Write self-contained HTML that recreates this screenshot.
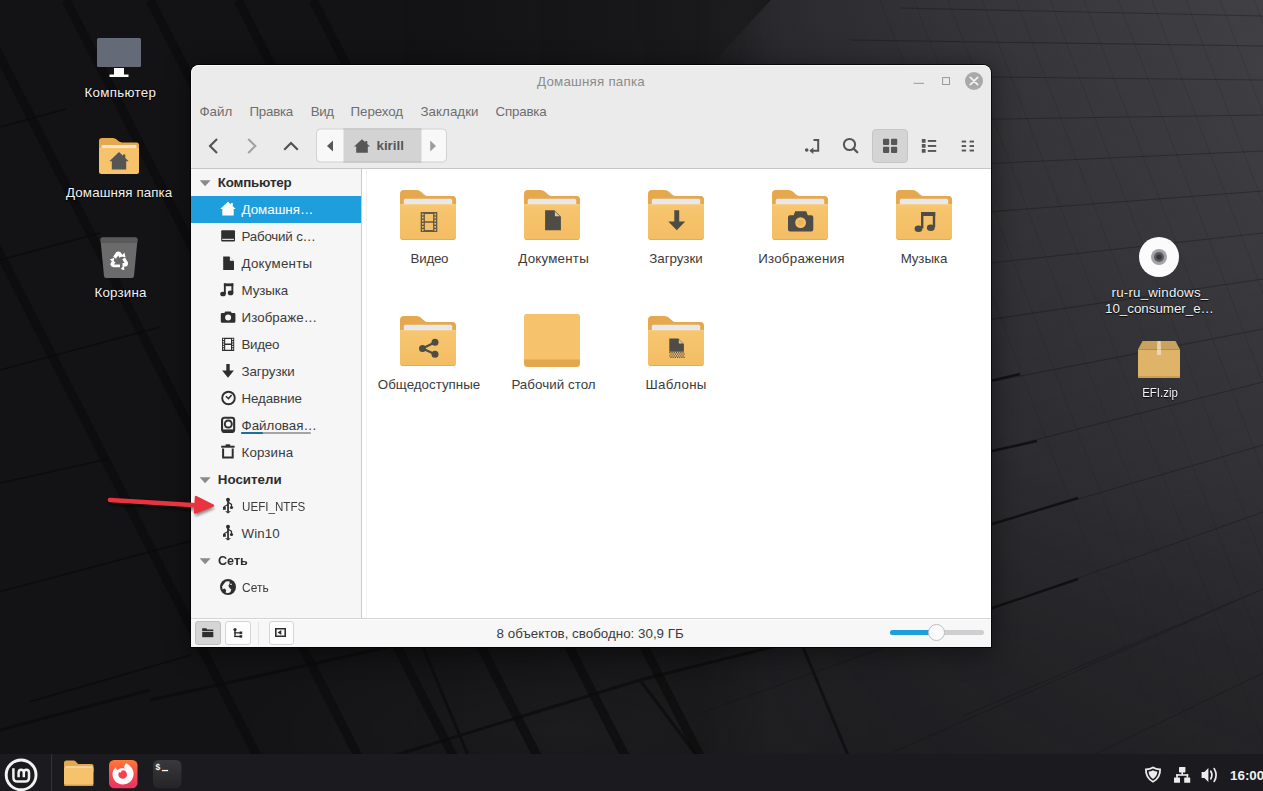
<!DOCTYPE html>
<html lang="ru">
<head>
<meta charset="utf-8">
<title>Домашняя папка</title>
<style>
*{box-sizing:border-box;margin:0;padding:0}
html,body{width:1263px;height:791px;overflow:hidden;background:#141416}
body{position:relative;font-family:"Liberation Sans",sans-serif;font-size:13.33px;color:#3a3a3a}
svg{display:block;overflow:visible}
#wall{position:absolute;left:0;top:0;width:1263px;height:791px}
.dl{position:absolute;display:block;color:#f2f2f2;font-size:13.33px;white-space:nowrap;text-align:center;text-shadow:0 1px 1px rgba(0,0,0,.85),0 0 2px rgba(0,0,0,.5);line-height:16px;height:16px}
.di{position:absolute}
#win{position:absolute;left:191px;top:65px;width:800px;height:582px;background:#ebebec;border-radius:8px 8px 0 0;overflow:hidden}
#winsh{position:absolute;left:191px;top:65px;width:800px;height:582px;border-radius:8px 8px 0 0;box-shadow:0 0 0 1px rgba(0,0,0,.75),0 4px 26px 2px rgba(0,0,0,.42)}
#win .hl{position:absolute;left:0;top:0;right:0;bottom:0;border-radius:8px 8px 0 0;box-shadow:inset 0 1px 0 #f9f9f9,inset 1px 0 0 #f4f4f4}
.t{position:absolute;display:block;white-space:nowrap;line-height:16px;height:16px}
.menu{color:#6e6e6e;top:39px}
#side{position:absolute;left:0;top:104px;width:170px;height:449px;background:#f6f6f6}
#sidediv{position:absolute;left:170px;top:104px;width:1px;height:449px;background:#c9c9c9}
#main{position:absolute;left:171px;top:104px;width:629px;height:449px;background:#fff}
#tbline{position:absolute;left:0;top:103px;width:800px;height:1px;background:#c6c6c8}
#status{position:absolute;left:0;top:553px;width:800px;height:29px;background:#f7f7f7;border-top:1px solid #d4d4d4;box-shadow:inset 0 1px 0 #fdfdfd}
.row{position:absolute;left:0;width:170px;height:27px}
.row.sel{background:#1f9ede}
.row .lb{position:absolute;display:block;left:50.5px;top:6px;height:16px;line-height:16px;white-space:nowrap;color:#3b3b3b}
.row.sel .lb{color:#fff}
.row.h .lb{left:26.8px;font-weight:bold;color:#2c2c2c}
.row svg{position:absolute}
.fl{position:absolute;display:block;color:#3b3b3b;white-space:nowrap;text-align:center;line-height:16px;height:16px}
.fi{position:absolute}
#panel{position:absolute;left:0;top:754px;width:1263px;height:37px;background:#1b1b1f}
#panel svg{position:absolute}
.sbtn{position:absolute;top:2px;width:25.5px;height:24px;border:1px solid #d6d6d6;border-radius:3px;background:#fdfdfd}
.sbtn.on{background:#d5d5d5;border-color:#c1c1c1}
</style>
</head>
<body>

<svg id="wall" viewBox="0 0 1263 791">
<defs>
<linearGradient id="gh" gradientUnits="userSpaceOnUse" x1="0" y1="0" x2="1263" y2="0">
<stop offset="0.0000" stop-color="#414146" stop-opacity="0"/>
<stop offset="0.3167" stop-color="#414146" stop-opacity="0"/>
<stop offset="0.4434" stop-color="#414146" stop-opacity="0.06"/>
<stop offset="0.5542" stop-color="#414146" stop-opacity="0.14"/>
<stop offset="0.5859" stop-color="#414146" stop-opacity="0.33"/>
<stop offset="0.6097" stop-color="#414146" stop-opacity="0.5"/>
<stop offset="0.6334" stop-color="#414146" stop-opacity="0.55"/>
<stop offset="0.6888" stop-color="#414146" stop-opacity="0.63"/>
<stop offset="0.7443" stop-color="#414146" stop-opacity="0.71"/>
<stop offset="0.7918" stop-color="#414146" stop-opacity="0.77"/>
<stop offset="0.8741" stop-color="#414146" stop-opacity="0.86"/>
<stop offset="1.0000" stop-color="#414146" stop-opacity="0.98"/>
</linearGradient>
<linearGradient id="gedge" gradientUnits="userSpaceOnUse" x1="690" y1="0" x2="771" y2="0"><stop offset="0" stop-color="#151517" stop-opacity="0"/><stop offset="1" stop-color="#151517" stop-opacity=".8"/></linearGradient>
<linearGradient id="gv" gradientUnits="userSpaceOnUse" x1="0" y1="0" x2="0" y2="791">
<stop offset="0" stop-color="#fff"/>
<stop offset=".316" stop-color="#e0e0e0"/>
<stop offset=".594" stop-color="#b4b4b4"/>
<stop offset=".82" stop-color="#747474"/>
<stop offset=".95" stop-color="#606060"/>
<stop offset="1" stop-color="#585858"/>
</linearGradient>
<mask id="mv"><rect width="1263" height="791" fill="url(#gv)"/></mask>
<radialGradient id="glow" cx="560" cy="730" r="330" gradientUnits="userSpaceOnUse" gradientTransform="translate(0 511) scale(1 .3)">
<stop offset="0" stop-color="#fff" stop-opacity=".035"/><stop offset="1" stop-color="#fff" stop-opacity="0"/>
</radialGradient>
<linearGradient id="ffront" x1="0" y1="0" x2="0" y2="1"><stop offset="0" stop-color="#f7c670"/><stop offset="1" stop-color="#f3bd63"/></linearGradient>
</defs>
<rect width="1263" height="791" fill="#131315"/>
<rect width="1263" height="791" fill="url(#gh)" mask="url(#mv)"/>
<path d="M690 0 H771 L709.6 66 H690Z" fill="url(#gedge)"/>
<rect width="1263" height="791" fill="url(#glow)"/>
<path d="M-130 0 L275 791 M-29 0 L376 791 M66 0 L471 791 M150 0 L555 791 M238 0 L643 791 M313 0 L718 791" stroke="#0b0b0d" stroke-width="9" fill="none" opacity=".7"/>
<path d="M150 700 L420 640 M380 760 L640 680 L800 640 M0 730 L150 690 M640 680 L700 760 M420 640 L470 760 M800 640 L850 760" stroke="#0b0b0d" stroke-width="3" fill="none" opacity=".7"/>
<path d="M700 73.6 L1263 80 M700 123.6 L1263 115 M700 176.7 L1263 151 M700 233.8 L1263 191 M700 295.1 L1263 233 M700 362.5 L1263 279 M700 438.2 L1263 329 M700 525.4 L1263 382 M700 609.8 L1263 445 M700 713.2 L1263 512 M700 837.3 L1263 589 M963 716 L1263 589 M1000 800 L1263 673 M850 40 L1263 46 M900 8 L1263 16" stroke="#151517" stroke-width="1.1" fill="none" opacity=".38"/>
<path d="M880 0 L1180 791 M914 0 L1214 791 M948 0 L1248 791 M982 0 L1282 791 M1016 0 L1316 791 M1050 0 L1350 791 M1084 0 L1384 791 M1118 0 L1418 791 M1152 0 L1452 791 M1186 0 L1486 791 M1220 0 L1520 791 M1254 0 L1554 791 M1288 0 L1588 791 M1322 0 L1622 791" stroke="#18181a" stroke-width="1" fill="none" opacity=".15"/>
<path d="M992 451 L1037 441 M992 524 L1078 498 M992 608 L1078 579 M992 380.5 L1020 374" stroke="#0d0d0f" stroke-width="2.4" fill="none" opacity=".8"/>
<path d="M0 483 L108 459 M0 591.5 L191 541 M29 702 L191 655 M0 127 L66 109 M0 260 L100 233 M0 370 L160 327" stroke="#0a0a0c" stroke-width="1.6" fill="none" opacity=".7"/>
</svg>

<svg class="di" style="left:96px;top:37px" width="46" height="41" viewBox="0 0 46 41"><rect x="1" y="1" width="44" height="29" rx="1.5" fill="#646a78"/><path d="M18 31 H28 V37.5 H32.5 V40 H13.5 V37.5 H18Z" fill="#fafafa"/></svg>
<span class="dl" style="left:70.4px;top:85px;width:100px;letter-spacing:.33px">Компьютер</span>
<svg class="di" style="left:99px;top:138px" width="40" height="36" viewBox="0 0 40 36"><path d="M0 3 Q0 0 3 0 H14 Q16 0 18 1.8 L20 3.6 Q21 4.4 23 4.4 H37.5 Q40 4.4 40 7 V15 H0Z" fill="#e5a84c"/><rect x="2.5" y="7" width="35" height="5" rx="1" fill="#fbe6c9"/><path d="M0 10 H40 V33.5 Q40 36 37.5 36 H2.5 Q0 36 0 33.5Z" fill="#f6c36c"/><path d="M20 14 L10.3 23.3 H12.8 V31.5 H27.2 V23.3 H29.7 L26.3 20 V16.5 H24 V17.8Z" fill="#555555"/></svg>
<span class="dl" style="left:49.2px;top:185px;width:140px;letter-spacing:.11px">Домашняя папка</span>
<svg class="di" style="left:100px;top:237px" width="38" height="42" viewBox="0 0 38 42"><path d="M0.5 2.5 Q0.3 0.5 2.5 0.5 H35.5 Q37.7 0.5 37.5 2.5 L34 39 Q33.8 41 31.8 41 H6.2 Q4.2 41 4 39Z" fill="#6b6b6b"/><path d="M0.5 2.5 Q0.3 0.5 2.5 0.5 H35.5 Q37.7 0.5 37.5 2.5 L37.2 6 H0.8Z" fill="#5a5a5a"/><g fill="#fff" transform="translate(19.1 23.6) scale(1.1) translate(-19.7 -19.9)"><path d="M14.3 16.5 L17 12.2 Q19 11.2 21 12.2 L23.2 15.6 L20 17.3 L18.9 15.3 L16.9 18.2Z"/><path d="M25 17 L27.8 21.6 Q28.2 23.8 26.4 25.2 H22.8 V22 H24.6 L22.6 18.6Z"/><path d="M20.5 26 H14.5 Q12.2 25.4 11.6 23.2 L13.6 19.6 L16.4 21.4 L15 23.4 H20.5Z"/><path d="M24.5 12.6 L25.6 16.9 L21.3 16.2Z"/><path d="M21.2 27.6 L24.2 24 L24.4 28.6Z"/><path d="M11.2 19 L15.3 17.4 L14.8 21.8Z"/></g></svg>
<span class="dl" style="left:70.5px;top:285px;width:100px;letter-spacing:.19px">Корзина</span>
<svg class="di" style="left:1139px;top:237px" width="40" height="40" viewBox="0 0 40 40"><circle cx="20" cy="20" r="20" fill="#fbfbfb"/><circle cx="20" cy="20" r="8" fill="#a3a3a6"/><circle cx="20" cy="20" r="5" fill="#5b5b60"/><circle cx="20" cy="20" r="2.6" fill="#36363a"/></svg>
<span class="dl" style="left:1080px;top:285px;width:160px;letter-spacing:.2px">ru-ru_windows_</span>
<span class="dl" style="left:1079.5px;top:301px;width:160px">10_consumer_e…</span>
<svg class="di" style="left:1138px;top:341px" width="42" height="37" viewBox="0 0 42 37"><path d="M4.5 0 H37.5 L42 8.5 H0Z" fill="#c9a25d"/><path d="M0 8.5 H42 V35.5 Q42 37 40.5 37 H1.5 Q0 37 0 35.5Z" fill="#dfb469"/><path d="M19.3 0 H22.7 L23 8.5 H19Z" fill="#e9d2a8"/><rect x="19" y="8.5" width="4" height="5.5" fill="#ecd6ad"/><rect x="0" y="35" width="42" height="2" rx="1" fill="#c99f58"/></svg>
<span class="dl" style="left:1110px;top:385px;width:100px;transform:scaleX(.86)">EFI.zip</span>
<div id="winsh"></div><div id="win"><div class="hl"></div>
<span class="t" id="title" style="left:300px;width:200px;top:9px;text-align:center;color:#8b8b8b;letter-spacing:.22px">Домашняя папка</span>
<svg style="position:absolute;left:715px;top:6px" width="80" height="20" viewBox="906 71 80 20"><rect x="913.5" y="82.8" width="10.5" height="1" fill="#9a9a9a"/><rect x="942.6" y="77.6" width="6.9" height="6.9" fill="none" stroke="#9a9a9a" stroke-width="1"/><circle cx="974" cy="81" r="9" fill="#a9a9a9"/><path d="M970.3 77.3 L977.7 84.7 M977.7 77.3 L970.3 84.7" stroke="#f3f3f3" stroke-width="1.7" stroke-linecap="round"/></svg>
<span class="t menu" id="m0" style="left:8.4px;letter-spacing:0px">Файл</span>
<span class="t menu" id="m1" style="left:58.5px;letter-spacing:-0.25px">Правка</span>
<span class="t menu" id="m2" style="left:119.7px;letter-spacing:-0.4px">Вид</span>
<span class="t menu" id="m3" style="left:159.5px;letter-spacing:-0.05px">Переход</span>
<span class="t menu" id="m4" style="left:229.5px;letter-spacing:0.04px">Закладки</span>
<span class="t menu" id="m5" style="left:304.5px;letter-spacing:-0.18px">Справка</span>
<div id="tbline"></div>
<svg style="position:absolute;left:0;top:59px" width="800" height="44" viewBox="191 124 800 44"><g fill="none" stroke-linecap="square" stroke-linejoin="miter"><path d="M216.3 139.8 L210 146 L216.3 152.2" stroke="#525252" stroke-width="2.1"/><path d="M249 139.8 L255.3 146 L249 152.2" stroke="#a2a2a2" stroke-width="2.1"/><path d="M285 149 L291 143 L297 149" stroke="#525252" stroke-width="2.2"/></g><rect x="316.5" y="129" width="130" height="33" rx="4" fill="#f8f8f8" stroke="#d2d2d2"/><rect x="343.5" y="128.5" width="78" height="34" fill="#d3d3d3"/><path d="M343.5 129 H421.5 M343.5 162 H421.5" stroke="#bfbfbf"/><path d="M327 146 L333 140.6 V151.6Z" fill="#575757"/><path d="M436 146 L430.2 140.6 V151.6Z" fill="#9d9d9d"/><path d="M362 139.2 L354 146.6 H356.2 V152.8 H367.8 V146.6 H370 L367.3 144.1 V141 H365.4 V142.3Z" fill="#565656"/><circle cx="806.7" cy="150" r="1.8" fill="#555"/><path d="M813.5 140 H818.2 V150.8 H812" fill="none" stroke="#555" stroke-width="2"/><path d="M809.3 150.8 L813.3 147.6 V154Z" fill="#555"/><circle cx="849.5" cy="144.5" r="5.6" fill="none" stroke="#555" stroke-width="2"/><path d="M853.6 148.6 L857.3 152.3" stroke="#555" stroke-width="2.2" stroke-linecap="round"/><rect x="872.5" y="129.5" width="35" height="33" rx="3.5" fill="#d4d4d4" stroke="#c6c6c6"/><g fill="#565656"><rect x="883" y="138.8" width="6.2" height="6.2" rx="1"/><rect x="891" y="138.8" width="6.2" height="6.2" rx="1"/><rect x="883" y="146.8" width="6.2" height="6.2" rx="1"/><rect x="891" y="146.8" width="6.2" height="6.2" rx="1"/><rect x="921.8" y="139" width="3.8" height="3.8" rx=".6"/><rect x="921.8" y="144" width="3.8" height="3.8" rx=".6"/><rect x="921.8" y="149" width="3.8" height="3.8" rx=".6"/><rect x="927.8" y="140" width="8.4" height="1.9"/><rect x="927.8" y="145" width="8.4" height="1.9"/><rect x="927.8" y="150" width="8.4" height="1.9"/><rect x="961.7" y="140.6" width="4.4" height="1.9"/><rect x="961.7" y="145.1" width="4.4" height="1.9"/><rect x="961.7" y="149.6" width="4.4" height="1.9"/><rect x="969.6" y="140.6" width="4.4" height="1.9"/><rect x="969.6" y="145.1" width="4.4" height="1.9"/><rect x="969.6" y="149.6" width="4.4" height="1.9"/></g></svg>
<span class="t" id="kirill" style="left:185.5px;top:73px;font-weight:bold;color:#565656">kirill</span>
<div id="side">
<div class="row h" style="top:0px"><svg style="left:8px;top:10.5px" width="12" height="7" viewBox="0 0 12 7"><path d="M0.6 0.2 H11.6 L6.1 6.3Z" fill="#8a8a8a"/></svg><span class="lb" id="sb0" style="letter-spacing:-.19px">Компьютер</span></div>
<div class="row sel" style="top:27px"><svg style="left:28px;top:4px" width="18" height="18" viewBox="-1 -1 18 18" fill="#ffffff"><path d="M8 0.8 L0.2 8 H2.3 V14.6 H13.7 V8 H15.8 L12.8 5.2 V2 H10.8 V3.4Z"/></svg><span class="lb" id="sb1" style="">Домашня…</span></div>
<div class="row " style="top:54px"><svg style="left:28px;top:4px" width="18" height="18" viewBox="-1 -1 18 18" fill="#2e2e2e"><rect x="1.2" y="2.2" width="13.8" height="11.2" rx="1"/><rect x="2.2" y="10.8" width="11.8" height="1.1" fill="#f0f0f0"/></svg><span class="lb" id="sb2" style="letter-spacing:-.19px">Рабочий с…</span></div>
<div class="row " style="top:81px"><svg style="left:28px;top:4px" width="18" height="18" viewBox="-1 -1 18 18" fill="#2e2e2e"><path d="M3.2 1.6 H9.4 L14 6.2 V15 H3.2Z"/><path d="M9.9 1.8 L13.8 5.7 H9.9Z" fill="#f5f5f5"/></svg><span class="lb" id="sb3" style="letter-spacing:.24px">Документы</span></div>
<div class="row " style="top:108px"><svg style="left:28px;top:4px" width="18" height="18" viewBox="-1 -1 18 18" fill="#2e2e2e"><path d="M3.9 1.4 H13.3 V4.2 H3.9Z"/><rect x="3.9" y="1.4" width="1.9" height="10.6"/><rect x="11.4" y="1.4" width="1.9" height="9.6"/><ellipse cx="3" cy="12" rx="2.8" ry="2.3"/><ellipse cx="10.6" cy="10.9" rx="2.8" ry="2.3"/></svg><span class="lb" id="sb4" style="letter-spacing:-.1px">Музыка</span></div>
<div class="row " style="top:135px"><svg style="left:28px;top:4px" width="18" height="18" viewBox="-1 -1 18 18" fill="#2e2e2e"><path d="M0.8 5.2 Q0.8 4 2 4 H4.3 L5.3 2.4 H10.7 L11.7 4 H14.2 Q15.4 4 15.4 5.2 V12.5 Q15.4 13.7 14.2 13.7 H2 Q0.8 13.7 0.8 12.5Z"/><circle cx="8.1" cy="8.6" r="3" fill="#f5f5f5"/></svg><span class="lb" id="sb5" style="letter-spacing:.07px">Изображе…</span></div>
<div class="row " style="top:162px"><svg style="left:28px;top:4px" width="18" height="18" viewBox="-1 -1 18 18" fill="#2e2e2e"><path d="M2 1.7 H14.2 V15 H2Z M5.2 3 V7.6 H11 V3Z M5.2 9.1 V13.7 H11 V9.1Z" fill-rule="evenodd"/><rect x="2.9" y="2.7" width="1.2" height="1.3" fill="#f5f5f5"/><rect x="12.1" y="2.7" width="1.2" height="1.3" fill="#f5f5f5"/><rect x="2.9" y="5.1" width="1.2" height="1.3" fill="#f5f5f5"/><rect x="12.1" y="5.1" width="1.2" height="1.3" fill="#f5f5f5"/><rect x="2.9" y="7.5" width="1.2" height="1.3" fill="#f5f5f5"/><rect x="12.1" y="7.5" width="1.2" height="1.3" fill="#f5f5f5"/><rect x="2.9" y="9.9" width="1.2" height="1.3" fill="#f5f5f5"/><rect x="12.1" y="9.9" width="1.2" height="1.3" fill="#f5f5f5"/><rect x="2.9" y="12.3" width="1.2" height="1.3" fill="#f5f5f5"/><rect x="12.1" y="12.3" width="1.2" height="1.3" fill="#f5f5f5"/></svg><span class="lb" id="sb6" style="letter-spacing:-.28px">Видео</span></div>
<div class="row " style="top:189px"><svg style="left:28px;top:4px" width="18" height="18" viewBox="-1 -1 18 18" fill="#2e2e2e"><path d="M6.3 1 H9.7 V7.4 H13.9 L8 14.7 L2.1 7.4 H6.3Z"/></svg><span class="lb" id="sb7" style="letter-spacing:-.07px">Загрузки</span></div>
<div class="row " style="top:216px"><svg style="left:28px;top:4px" width="18" height="18" viewBox="-1 -1 18 18" fill="#2e2e2e"><circle cx="8.5" cy="8" r="6.3" fill="none" stroke="#2e2e2e" stroke-width="1.9"/><path d="M5.9 6.2 L8.5 8.6 L11.6 4.9" fill="none" stroke="#2e2e2e" stroke-width="1.5"/></svg><span class="lb" id="sb8" style="letter-spacing:-.1px">Недавние</span></div>
<div class="row " style="top:243px"><svg style="left:28px;top:4px" width="18" height="18" viewBox="-1 -1 18 18" fill="#2e2e2e"><rect x="2.05" y="0.8" width="12.1" height="14.05" rx="2.3" fill="none" stroke="#2e2e2e" stroke-width="2.1"/><rect x="2" y="12.4" width="12.2" height="3"/><circle cx="8.3" cy="7" r="3.5" fill="none" stroke="#2e2e2e" stroke-width="1.9"/><path d="M5.6 9 L4.4 10.6 L6.8 10.2Z"/></svg><span class="lb" id="sb9" style="">Файловая…</span><div style="position:absolute;left:50px;top:20px;width:70px;height:2px;background:#a4a4a4;border-radius:1px"></div><div style="position:absolute;left:50px;top:20px;width:21.5px;height:2px;background:#1b6f9f;border-radius:1px"></div></div>
<div class="row " style="top:270px"><svg style="left:28px;top:4px" width="18" height="18" viewBox="-1 -1 18 18" fill="#2e2e2e"><rect x="1.2" y="1.7" width="13.4" height="2"/><rect x="5.6" y="0.3" width="4.6" height="2"/><path d="M3.1 4.4 V13.4 H12.7 V4.4" fill="none" stroke="#2e2e2e" stroke-width="2"/></svg><span class="lb" id="sb10" style="letter-spacing:.14px">Корзина</span></div>
<div class="row h" style="top:297px"><svg style="left:8px;top:10.5px" width="12" height="7" viewBox="0 0 12 7"><path d="M0.6 0.2 H11.6 L6.1 6.3Z" fill="#8a8a8a"/></svg><span class="lb" id="sb11" style="">Носители</span></div>
<div class="row " style="top:324px"><svg style="left:28px;top:4px" width="18" height="18" viewBox="-1 -1 18 18" fill="#2e2e2e"><circle cx="8" cy="1.7" r="2"/><rect x="7.15" y="1.6" width="1.75" height="12"/><path d="M8 15.5 L5 13.2 H11Z"/><path d="M8 6.4 L4.3 8.6 V9.4" fill="none" stroke="#2e2e2e" stroke-width="1.2"/><rect x="3" y="8.9" width="2.8" height="2.9"/><path d="M8 4 L11.5 6.4 V9" fill="none" stroke="#2e2e2e" stroke-width="1.2"/><circle cx="11.5" cy="9.5" r="1.6"/></svg><span class="lb" id="sb12" style="transform:scaleX(.872);transform-origin:0 50%">UEFI_NTFS</span></div>
<div class="row " style="top:351px"><svg style="left:28px;top:4px" width="18" height="18" viewBox="-1 -1 18 18" fill="#2e2e2e"><circle cx="8" cy="1.7" r="2"/><rect x="7.15" y="1.6" width="1.75" height="12"/><path d="M8 15.5 L5 13.2 H11Z"/><path d="M8 6.4 L4.3 8.6 V9.4" fill="none" stroke="#2e2e2e" stroke-width="1.2"/><rect x="3" y="8.9" width="2.8" height="2.9"/><path d="M8 4 L11.5 6.4 V9" fill="none" stroke="#2e2e2e" stroke-width="1.2"/><circle cx="11.5" cy="9.5" r="1.6"/></svg><span class="lb" id="sb13" style="letter-spacing:.1px">Win10</span></div>
<div class="row h" style="top:378px"><svg style="left:8px;top:10.5px" width="12" height="7" viewBox="0 0 12 7"><path d="M0.6 0.2 H11.6 L6.1 6.3Z" fill="#8a8a8a"/></svg><span class="lb" id="sb14" style="transform:scaleX(.945);transform-origin:0 50%">Сеть</span></div>
<div class="row " style="top:405px"><svg style="left:28px;top:4px" width="18" height="18" viewBox="-1 -1 18 18" fill="#2e2e2e"><circle cx="8" cy="8" r="8"/><g fill="#f5f5f5"><path d="M5.8 2.6 L9.3 2.2 L9.7 4.6 L8.4 6.8 L9.6 9 L11.3 10.6 L10.3 13.3 L7.6 14.3 L5.6 13.5 L6.2 11.2 L4.6 9.5 L2.6 10.4 L2.1 7.6 L3.6 5.2Z"/><rect x="10" y="4.8" width="2" height=".9"/></g><path d="M3.4 9.8 L5 10.6 L5.2 12.6 L3.8 11.6Z"/></svg><span class="lb" id="sb15" style="transform:scaleX(.9);transform-origin:0 50%">Сеть</span></div>
</div><div id="sidediv"></div>
<div id="main"><div style="position:absolute;left:4px;top:0;width:1px;height:449px;background:#f3f3f3"></div>
<svg class="fi" style="left:38px;top:21px" width="56" height="50" viewBox="0 0 56 50"><path d="M0 4 Q0 0 4 0 H16.5 Q19.2 0 21 1.7 L24.3 4.8 Q25.8 6 28 6 H52.5 Q56 6 56 9.5 V20 H0Z" fill="#e5a84c"/><rect x="3.8" y="8.8" width="48.4" height="8" rx="1.6" fill="#e8e8ec"/><path d="M0 14.2 H56 V46.5 Q56 50 52.5 50 H3.5 Q0 50 0 46.5Z" fill="url(#ffront)"/><rect x="0" y="14.2" width="56" height=".7" fill="#f9d28c"/><path d="M0 46 Q0 49.3 3.5 49.3 H52.5 Q56 49.3 56 46 V46.5 Q56 50 52.5 50 H3.5 Q0 50 0 46.5Z" fill="#e2a64e"/><g fill="#4f4b45" opacity=".88"><path d="M20.7 22 H37.3 V42 H20.7Z M24.9 24 V31.2 H33.1 V24Z M24.9 32.8 V40 H33.1 V32.8Z" fill-rule="evenodd"/></g><g fill="#f5c169"><rect x="22" y="23.6" width="1.6" height="1.7"/><rect x="34.4" y="23.6" width="1.6" height="1.7"/><rect x="22" y="26.7" width="1.6" height="1.7"/><rect x="34.4" y="26.7" width="1.6" height="1.7"/><rect x="22" y="29.8" width="1.6" height="1.7"/><rect x="34.4" y="29.8" width="1.6" height="1.7"/><rect x="22" y="32.9" width="1.6" height="1.7"/><rect x="34.4" y="32.9" width="1.6" height="1.7"/><rect x="22" y="36" width="1.6" height="1.7"/><rect x="34.4" y="36" width="1.6" height="1.7"/><rect x="22" y="39.1" width="1.6" height="1.7"/><rect x="34.4" y="39.1" width="1.6" height="1.7"/></g></svg>
<span class="fl" id="f0" style="left:-2.62px;width:140px;top:82px;letter-spacing:-0.25px">Видео</span>
<svg class="fi" style="left:162px;top:21px" width="56" height="50" viewBox="0 0 56 50"><path d="M0 4 Q0 0 4 0 H16.5 Q19.2 0 21 1.7 L24.3 4.8 Q25.8 6 28 6 H52.5 Q56 6 56 9.5 V20 H0Z" fill="#e5a84c"/><rect x="3.8" y="8.8" width="48.4" height="8" rx="1.6" fill="#e8e8ec"/><path d="M0 14.2 H56 V46.5 Q56 50 52.5 50 H3.5 Q0 50 0 46.5Z" fill="url(#ffront)"/><rect x="0" y="14.2" width="56" height=".7" fill="#f9d28c"/><path d="M0 46 Q0 49.3 3.5 49.3 H52.5 Q56 49.3 56 46 V46.5 Q56 50 52.5 50 H3.5 Q0 50 0 46.5Z" fill="#e2a64e"/><path d="M21.1 20.2 H30.4 L36.9 26.7 V40.3 H21.1Z" fill="#4f4b45"/><path d="M30.9 21.4 V26.2 H35.7Z" fill="#d8c7a6"/></svg>
<span class="fl" id="f1" style="left:121.61px;width:140px;top:82px;letter-spacing:0.22px">Документы</span>
<svg class="fi" style="left:286px;top:21px" width="56" height="50" viewBox="0 0 56 50"><path d="M0 4 Q0 0 4 0 H16.5 Q19.2 0 21 1.7 L24.3 4.8 Q25.8 6 28 6 H52.5 Q56 6 56 9.5 V20 H0Z" fill="#e5a84c"/><rect x="3.8" y="8.8" width="48.4" height="8" rx="1.6" fill="#e8e8ec"/><path d="M0 14.2 H56 V46.5 Q56 50 52.5 50 H3.5 Q0 50 0 46.5Z" fill="url(#ffront)"/><rect x="0" y="14.2" width="56" height=".7" fill="#f9d28c"/><path d="M0 46 Q0 49.3 3.5 49.3 H52.5 Q56 49.3 56 46 V46.5 Q56 50 52.5 50 H3.5 Q0 50 0 46.5Z" fill="#e2a64e"/><path d="M26.3 20.2 H31.2 V31.4 H37.2 L28.75 40.3 L20.3 31.4 H26.3Z" fill="#4f4b45"/></svg>
<span class="fl" id="f2" style="left:243.97px;width:140px;top:82px;letter-spacing:-0.05px">Загрузки</span>
<svg class="fi" style="left:410px;top:21px" width="56" height="50" viewBox="0 0 56 50"><path d="M0 4 Q0 0 4 0 H16.5 Q19.2 0 21 1.7 L24.3 4.8 Q25.8 6 28 6 H52.5 Q56 6 56 9.5 V20 H0Z" fill="#e5a84c"/><rect x="3.8" y="8.8" width="48.4" height="8" rx="1.6" fill="#e8e8ec"/><path d="M0 14.2 H56 V46.5 Q56 50 52.5 50 H3.5 Q0 50 0 46.5Z" fill="url(#ffront)"/><rect x="0" y="14.2" width="56" height=".7" fill="#f9d28c"/><path d="M0 46 Q0 49.3 3.5 49.3 H52.5 Q56 49.3 56 46 V46.5 Q56 50 52.5 50 H3.5 Q0 50 0 46.5Z" fill="#e2a64e"/><path d="M16 27.2 Q16 25.2 18 25.2 H21.6 L23.2 21.3 H34.2 L35.8 25.2 H39.3 Q41.3 25.2 41.3 27.2 V39.4 Q41.3 41.4 39.3 41.4 H18 Q16 41.4 16 39.4Z" fill="#4f4b45"/><circle cx="28.6" cy="32.6" r="5.4" fill="#f5c169"/><circle cx="28.6" cy="32.6" r="3.2" fill="#eeb458"/></svg>
<span class="fl" id="f3" style="left:369.42px;width:140px;top:82px;letter-spacing:0.25px">Изображения</span>
<svg class="fi" style="left:534px;top:21px" width="56" height="50" viewBox="0 0 56 50"><path d="M0 4 Q0 0 4 0 H16.5 Q19.2 0 21 1.7 L24.3 4.8 Q25.8 6 28 6 H52.5 Q56 6 56 9.5 V20 H0Z" fill="#e5a84c"/><rect x="3.8" y="8.8" width="48.4" height="8" rx="1.6" fill="#e8e8ec"/><path d="M0 14.2 H56 V46.5 Q56 50 52.5 50 H3.5 Q0 50 0 46.5Z" fill="url(#ffront)"/><rect x="0" y="14.2" width="56" height=".7" fill="#f9d28c"/><path d="M0 46 Q0 49.3 3.5 49.3 H52.5 Q56 49.3 56 46 V46.5 Q56 50 52.5 50 H3.5 Q0 50 0 46.5Z" fill="#e2a64e"/><g fill="#4f4b45"><path d="M25 22.1 H39.2 V26 H25Z"/><rect x="25" y="22.1" width="2.4" height="16.2"/><rect x="36.8" y="22.1" width="2.4" height="15.2"/><ellipse cx="22.5" cy="38.7" rx="3.9" ry="3.2"/><ellipse cx="34.8" cy="37.7" rx="3.9" ry="3.2"/></g></svg>
<span class="fl" id="f4" style="left:491.95px;width:140px;top:82px;letter-spacing:-0.1px">Музыка</span>
<svg class="fi" style="left:38px;top:147px" width="56" height="50" viewBox="0 0 56 50"><path d="M0 4 Q0 0 4 0 H16.5 Q19.2 0 21 1.7 L24.3 4.8 Q25.8 6 28 6 H52.5 Q56 6 56 9.5 V20 H0Z" fill="#e5a84c"/><rect x="3.8" y="8.8" width="48.4" height="8" rx="1.6" fill="#e8e8ec"/><path d="M0 14.2 H56 V46.5 Q56 50 52.5 50 H3.5 Q0 50 0 46.5Z" fill="url(#ffront)"/><rect x="0" y="14.2" width="56" height=".7" fill="#f9d28c"/><path d="M0 46 Q0 49.3 3.5 49.3 H52.5 Q56 49.3 56 46 V46.5 Q56 50 52.5 50 H3.5 Q0 50 0 46.5Z" fill="#e2a64e"/><g fill="#4f4b45" stroke="#4f4b45"><circle cx="22.5" cy="32.5" r="3.5" stroke="none"/><circle cx="35" cy="26.2" r="3.5" stroke="none"/><circle cx="35" cy="38.3" r="3.5" stroke="none"/><path d="M22.5 32.5 L35 26.2 M22.5 32.5 L35 38.3" stroke-width="2.1" fill="none"/></g></svg>
<span class="fl" id="f5" style="left:-3.00px;width:140px;top:208px;letter-spacing:0px">Общедоступные</span>
<svg class="fi" style="left:162px;top:145px" width="56" height="53" viewBox="0 0 56 53"><rect x="0" y="0" width="56" height="53" rx="3.5" fill="#e3a74f"/><path d="M0 3.5 Q0 0 3.5 0 H52.5 Q56 0 56 3.5 V45.5 H0Z" fill="#f6c36c"/></svg>
<span class="fl" id="f6" style="left:121.53px;width:140px;top:208px;letter-spacing:0.05px">Рабочий стол</span>
<svg class="fi" style="left:286px;top:147px" width="56" height="50" viewBox="0 0 56 50"><path d="M0 4 Q0 0 4 0 H16.5 Q19.2 0 21 1.7 L24.3 4.8 Q25.8 6 28 6 H52.5 Q56 6 56 9.5 V20 H0Z" fill="#e5a84c"/><rect x="3.8" y="8.8" width="48.4" height="8" rx="1.6" fill="#e8e8ec"/><path d="M0 14.2 H56 V46.5 Q56 50 52.5 50 H3.5 Q0 50 0 46.5Z" fill="url(#ffront)"/><rect x="0" y="14.2" width="56" height=".7" fill="#f9d28c"/><path d="M0 46 Q0 49.3 3.5 49.3 H52.5 Q56 49.3 56 46 V46.5 Q56 50 52.5 50 H3.5 Q0 50 0 46.5Z" fill="#e2a64e"/><path d="M21.3 22.4 H30.3 L35.9 28 V35.8 H21.3Z" fill="#4f4b45"/><path d="M30.8 23.4 V27.6 H35Z" fill="#d8c7a6"/><path d="M21.3 36.6 H35.9 M22.4 38.2 H37 M21.3 39.8 H35.9 M22.4 41.4 H37" stroke="#4f4b45" stroke-width="1.25" stroke-dasharray="1.1 1.1"/></svg>
<span class="fl" id="f7" style="left:244.16px;width:140px;top:208px;letter-spacing:0.31px">Шаблоны</span>
</div>
<div id="status">
<div class="sbtn on" style="left:4px"></div><div class="sbtn" style="left:34px"></div><div class="sbtn" style="left:77.6px"></div>
<div style="position:absolute;left:67px;top:3px;width:1px;height:23px;background:#e4e4e4"></div>
<svg style="position:absolute;left:0;top:0" width="110" height="28" viewBox="191 619 110 28"><g fill="#2e2e2e"><path d="M202.2 628.3 H206.2 L207.2 629.6 H213.3 V631 H202.2Z"/><path d="M202.2 631.8 H213.3 V637.2 H202.2Z"/><circle cx="235" cy="629.6" r="1.6"/><rect x="234.3" y="629" width="1.4" height="8"/><rect x="234.3" y="632.2" width="6" height="1.3"/><rect x="234.3" y="635.8" width="6" height="1.3"/><rect x="239.6" y="631.5" width="2.6" height="2.6"/><rect x="239.6" y="635.1" width="2.6" height="2.6"/><path d="M275 628 H286 V637 H275Z M276.6 629.6 V635.4 H284.4 V629.6Z" fill-rule="evenodd"/><path d="M277.6 632.5 L281.3 629.9 V635.1Z"/></g></svg>
<span class="t" id="stat" style="left:204.2px;width:390px;top:7px;letter-spacing:.02px;text-align:center;color:#3b3b3b">8 объектов, свободно: 30,9 ГБ</span>
<div style="position:absolute;left:699px;top:11px;width:94px;height:5px;border-radius:2.5px;background:#cfcfd2"></div>
<div style="position:absolute;left:699px;top:11px;width:45px;height:5px;border-radius:2.5px;background:#1f9ede"></div>
<div style="position:absolute;left:737px;top:5px;width:17px;height:17px;border-radius:50%;background:#fbfbfb;border:1px solid #bdbdbd"></div>
</div>
</div>
<svg class="di" style="left:100px;top:485px;z-index:5" width="130" height="45" viewBox="100 485 130 45"><defs><filter id="ash" x="-10%" y="-40%" width="120%" height="200%"><feGaussianBlur stdDeviation="1.6"/></filter></defs><g filter="url(#ash)" opacity=".45" transform="translate(1,3)"><path d="M110 500 L196 505.3" stroke="#000" stroke-width="4.5" stroke-linecap="round"/><path d="M195.3 496 L214 505.6 L194.3 513.5Z" fill="#000"/></g><path d="M110 500 L196 505.3" stroke="#ea3340" stroke-width="4.6" stroke-linecap="round"/><path d="M196 497 L213 505.6 L195 512.6Z" fill="#ea3340" stroke="#ea3340" stroke-width="2.4" stroke-linejoin="round"/></svg>
<div id="panel">
<svg style="left:3px;top:2px" width="36" height="36" viewBox="3 756 36 36"><circle cx="21.1" cy="774.9" r="14.9" fill="none" stroke="#f2f2f2" stroke-width="2.9"/><path d="M13.4 768.2 V777.5 Q13.4 781.6 17.5 781.6 H24.9 Q29 781.6 29 777.5 V772.8 Q29 769.7 26.4 769.7 Q23.8 769.7 23.8 772.8 V777.3 M23.8 772.8 Q23.8 769.7 21.2 769.7 Q18.6 769.7 18.6 772.8 V777.3" fill="none" stroke="#f2f2f2" stroke-width="2.5" stroke-linecap="butt" stroke-linejoin="round"/></svg>
<div style="position:absolute;left:51px;top:0;width:1px;height:37px;background:#323237"></div>
<svg style="left:64px;top:6px" width="30" height="27" viewBox="0 0 30 27"><path d="M0 3 Q0 0.5 2.5 0.5 H9.5 Q11 0.5 12 1.7 L13.5 3.4 Q14.2 4 15.5 4 H27.5 Q29.5 4 29.5 6 V12 H0Z" fill="#e5a84c"/><rect x="1.5" y="6.3" width="27" height="3" fill="#f3e3c6"/><path d="M0 7.6 H29.5 V23.5 Q29.5 25.8 27.2 25.8 H2.3 Q0 25.8 0 23.5Z" fill="#f6c36c"/><rect x="0" y="24.6" width="29.5" height="1.2" rx=".6" fill="#d9a047"/></svg>
<svg style="left:109px;top:6px" width="29" height="29" viewBox="0 0 29 29"><defs><linearGradient id="ffg" x1="0" y1="0" x2="0" y2="1"><stop offset="0" stop-color="#ff7a36"/><stop offset=".55" stop-color="#f8484f"/><stop offset="1" stop-color="#ee3160"/></linearGradient></defs><rect x="0" y="0" width="28.5" height="28.2" rx="5.2" fill="url(#ffg)"/><path d="M17.4 3.3 C20 5 24.8 8.5 24.6 14 C24.4 20.5 19.5 24.4 13.8 24.4 C8 24.4 3.5 20 3.5 14.3 C3.5 11 5 8.6 7 7.3 C7 8.6 7.6 9.6 8.6 10 C10.5 8.2 13 8 15.5 8.6 C14.6 6.8 15.6 4.6 17.4 3.3Z" fill="#fff"/><circle cx="13.7" cy="14.5" r="4.3" fill="#f5404f"/><path d="M8.8 11.4 Q11 9.6 13.8 10.4 Q11.8 11 11.4 12.8Z" fill="#fff"/></svg>
<svg style="left:153px;top:6px" width="29" height="29" viewBox="0 0 29 29"><defs><linearGradient id="tg" x1="0" y1="0" x2="0" y2="1"><stop offset="0" stop-color="#39393b"/><stop offset="1" stop-color="#252527"/></linearGradient></defs><rect x="0" y="0" width="28.4" height="28.2" rx="5.5" fill="url(#tg)"/><text x="2.6" y="9.8" font-family="Liberation Sans, sans-serif" font-size="8.6" font-weight="bold" fill="#f6f6f6">$</text><rect x="8.9" y="9.9" width="6.2" height="1.3" fill="#f6f6f6"/></svg>
<svg style="left:1143px;top:10px" width="80" height="22" viewBox="1143 764 80 22"><g fill="#ececec"><path d="M1153 766.6 Q1157 768.8 1161 768.4 Q1161.6 778 1153 782.8 Q1144.4 778 1145 768.4 Q1149 768.8 1153 766.6Z M1153 768.6 Q1150 770.2 1146.8 770.2 Q1146.8 777 1153 780.8 Q1159.2 777 1159.2 770.2 Q1156 770.2 1153 768.6Z" fill-rule="evenodd"/><path d="M1153 770.2 Q1151 771.4 1148.6 771.6 Q1148.8 776.2 1153 779 Q1157.2 776.2 1157.4 771.6 Q1155 771.4 1153 770.2Z"/><rect x="1179" y="767" width="6.4" height="5.4" rx=".6"/><rect x="1174" y="777.4" width="6" height="5.4" rx=".6"/><rect x="1184.2" y="777.4" width="6" height="5.4" rx=".6"/><rect x="1181.4" y="772" width="1.6" height="3"/><rect x="1176.2" y="774.2" width="12" height="1.6"/><rect x="1176.2" y="774.2" width="1.6" height="3.6"/><rect x="1186.6" y="774.2" width="1.6" height="3.6"/><path d="M1201.6 772 H1204.4 L1208.4 768 V782 L1204.4 778 H1201.6Z"/></g><path d="M1210.8 771.2 Q1213 775 1210.8 778.8 M1214.2 768.6 Q1218 775 1214.2 781.4" fill="none" stroke="#ececec" stroke-width="1.7" stroke-linecap="round"/></svg>
<span class="t" id="clock" style="left:1230px;top:13.5px;color:#f0f0f0;font-size:13.4px;font-weight:bold">16:00</span>
</div>
</body>
</html>
